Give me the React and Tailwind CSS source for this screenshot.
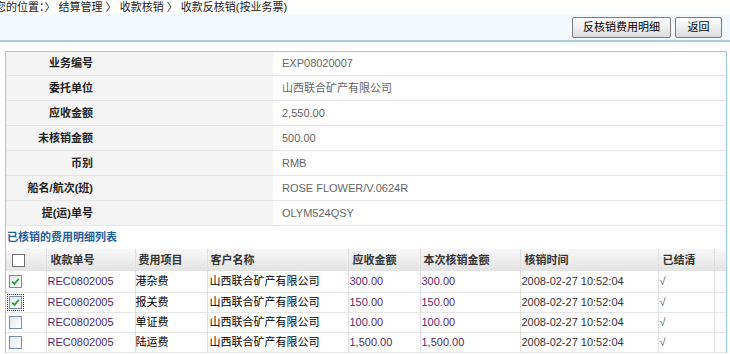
import React from "react";

const details = [
  ["业务编号", "EXP08020007"],
  ["委托单位", "山西联合矿产有限公司"],
  ["应收金额", "2,550.00"],
  ["未核销金额", "500.00"],
  ["币别", "RMB"],
  ["船名/航次(班)", "ROSE FLOWER/V.0624R"],
  ["提(运)单号", "OLYM524QSY"],
];

const rows = [
  { checked: true, focus: false, item: "港杂费", amt: "300.00", cur: "300.00" },
  { checked: true, focus: true, item: "报关费", amt: "150.00", cur: "150.00" },
  { checked: false, focus: false, item: "单证费", amt: "100.00", cur: "100.00" },
  { checked: false, focus: false, item: "陆运费", amt: "1,500.00", cur: "1,500.00" },
];

const font = { fontFamily: '"Liberation Sans", "Noto Sans CJK SC", sans-serif' };

function Box({ checked, header }) {
  return (
    <span
      className={`inline-flex h-[13px] w-[13px] items-center justify-center border ${
        header ? "border-[#6f6f6f] bg-white" : "border-[#6f8fb4] bg-gradient-to-br from-[#e3e9f0] to-white"
      }`}
    >
      {checked && (
        <svg width="9" height="9" viewBox="0 0 9 9">
          <path d="M1.2 4.6 L3.5 6.9 L7.8 1.8" fill="none" stroke="#2aa02a" strokeWidth="1.7" />
        </svg>
      )}
    </span>
  );
}

export default function App() {
  return (
    <div className="w-[730px] h-[354px] overflow-hidden bg-white text-[11px] leading-none text-black" style={font}>
      <div className="h-[14px] flex items-center ml-[-5px] whitespace-nowrap text-[11px] text-[#222]">
        您的位置：〉 结算管理 〉 收款核销 〉 收款反核销(按业务票)
      </div>
      <div className="h-[28px] bg-[#f3f9fd] border-b-2 border-[#a9cbe3] flex items-center justify-end gap-[4px] pr-[8px] box-border">
        <button className="h-[21px] w-[99px] border border-[#7b7b7b] rounded-[2px] bg-gradient-to-b from-white to-[#dedede] text-[11px] text-black">
          反核销费用明细
        </button>
        <button className="h-[21px] w-[47px] border border-[#7b7b7b] rounded-[2px] bg-gradient-to-b from-white to-[#dedede] text-[11px] text-black">
          返回
        </button>
      </div>
      <div className="mt-[9px] ml-[5px] w-[722px] h-[302px] border border-[#9ccbe8] box-border">
        {details.map(([k, v], i) => (
          <div key={k} className={`flex ${i === 0 ? "h-[24px]" : "h-[25px]"} border-b border-[#e6e6e6] box-border`}>
            <div className="w-[267px] bg-[#f4f4f4] flex items-center justify-end pr-[180px] font-bold text-[#222]">
              {k}
            </div>
            <div className="flex-1 flex items-center pl-[9px] text-[#666]">{v}</div>
          </div>
        ))}
        <div className="h-[23px] flex items-center pl-[1px] font-bold text-[#1f5d9c]">已核销的费用明细列表</div>
        <table className="table-fixed border-collapse w-[720px]">
          <colgroup>
            <col className="w-[40px]" />
            <col className="w-[89px]" />
            <col className="w-[72px]" />
            <col className="w-[141px]" />
            <col className="w-[72px]" />
            <col className="w-[100px]" />
            <col className="w-[138px]" />
            <col className="w-[56px]" />
            <col />
          </colgroup>
          <thead>
            <tr className="h-[22px] bg-gradient-to-b from-[#f8f8f8] to-[#e3e3e3] font-bold text-[#333]">
              <th className="border-r border-[#e0e0e0] text-left p-0 pl-[6px]">
                <span className="inline-flex mt-[2px]"><Box checked={false} header /></span>
              </th>
              <th className="border-r border-[#e0e0e0] text-left pl-[4px]">收款单号</th>
              <th className="border-r border-[#e0e0e0] text-left pl-[3px]">费用项目</th>
              <th className="border-r border-[#e0e0e0] text-left pl-[3px]">客户名称</th>
              <th className="border-r border-[#e0e0e0] text-left pl-[4px]">应收金额</th>
              <th className="border-r border-[#e0e0e0] text-left pl-[3px]">本次核销金额</th>
              <th className="border-r border-[#e0e0e0] text-left pl-[4px]">核销时间</th>
              <th className="border-r border-[#e0e0e0] text-left pl-[4px]">已结清</th>
              <th></th>
            </tr>
          </thead>
          <tbody>
            {rows.map((r, i) => (
              <tr key={i} className={`${i === 0 ? "h-[21px]" : "h-[20px]"} border-b border-[#e6e6e6]`}>
                <td className="border-r border-[#e0e0e0] p-0 pl-[1px]">
                  <span className={`inline-flex p-[1px] ${r.focus ? "outline-1 outline-dotted outline-[#333] -outline-offset-1" : ""}`}>
                    <span className="inline-flex p-[1px]"><Box checked={r.checked} /></span>
                  </span>
                </td>
                <td className="border-r border-[#e0e0e0] pl-[1px] text-[#4a2a6a]">REC0802005</td>
                <td className="border-r border-[#e0e0e0] pl-0">{r.item}</td>
                <td className="border-r border-[#e0e0e0] pl-[2px]">山西联合矿产有限公司</td>
                <td className="border-r border-[#e0e0e0] pl-[1px] text-[#5a2a6a]">{r.amt}</td>
                <td className="border-r border-[#e0e0e0] pl-[1px] text-[#5a2a6a]">{r.cur}</td>
                <td className="border-r border-[#e0e0e0] pl-[1px] text-[#333]">2008-02-27 10:52:04</td>
                <td className="border-r border-[#e0e0e0] pl-[1px] text-[#555]">√</td>
                <td></td>
              </tr>
            ))}
          </tbody>
        </table>
      </div>
    </div>
  );
}
